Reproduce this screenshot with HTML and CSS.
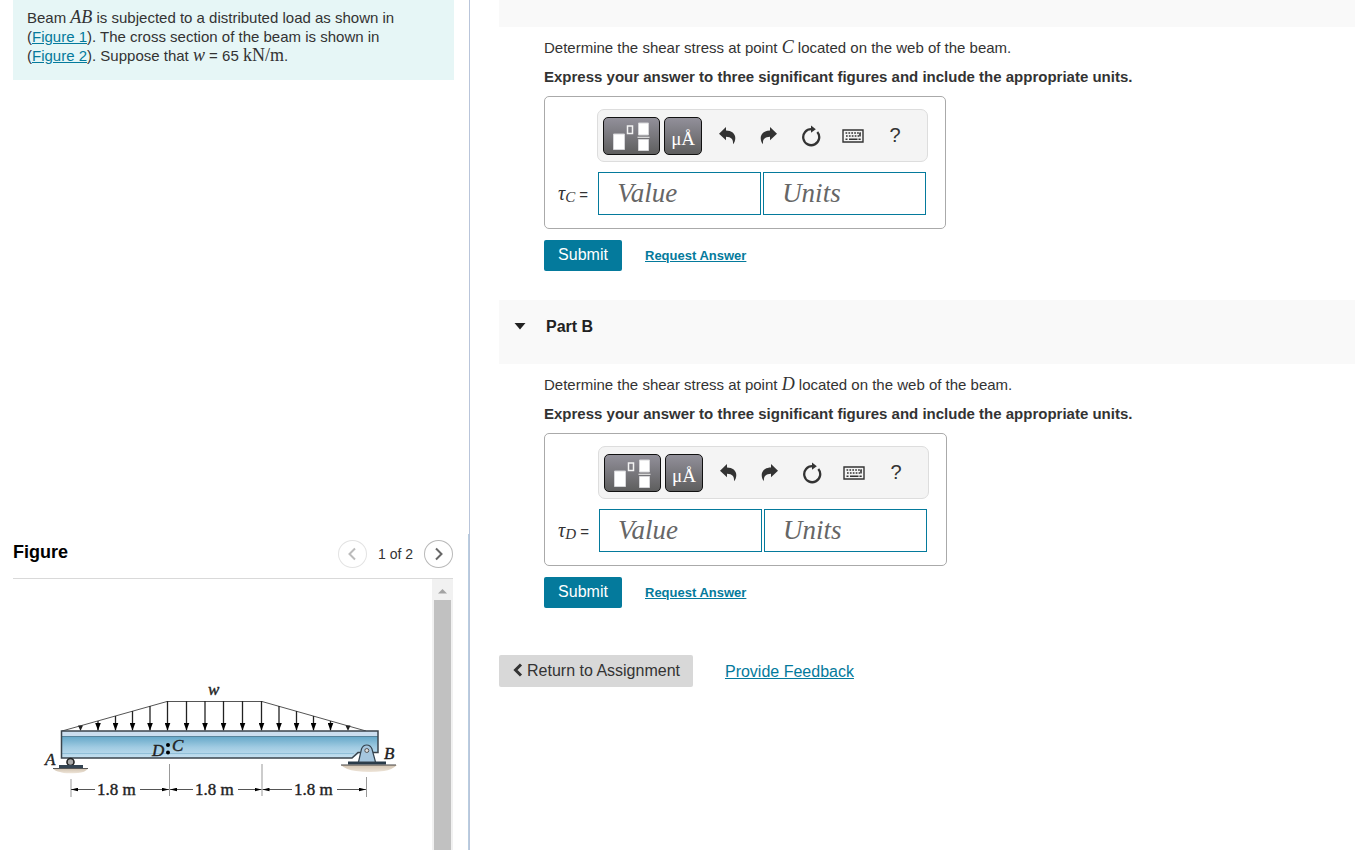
FILE: index.html
```html
<!DOCTYPE html>
<html lang="en">
<head>
<meta charset="utf-8">
<title>Shear stress in beam AB</title>
<link rel="stylesheet" href="styles.css">
</head>
<body>
<svg class="defs" aria-hidden="true">
  <symbol id="undo" viewBox="0 0 18 20"><path d="M1 7.700 8 1v3.600c5.500 0 9.300 3 9.300 7.400 0 2.600-.8 4.500-2.300 6.300.5-4.900-1.600-7.400-7-7.600V14.200Z"/></symbol>
  <symbol id="template" viewBox="0 0 37 30">
    <path d="M.5 13h11v15.500H.5zM25.500 2h10v12h-10zM25.500 18.500h10v11h-10z" fill="#fff" stroke="#d5d5d8" stroke-width="1"/>
    <path d="M14.500 5h5v7.500h-5z" fill="none" stroke="#f3f3f3" stroke-width="1.500"/>
    <path d="M24.500 16.300h12" stroke="#e4e4e4" stroke-width="1.200"/>
  </symbol>
  <symbol id="reset" viewBox="0 0 20 22"><path d="M10.500 4.200A8 8 0 1 0 16.300 7" fill="none" stroke="currentColor" stroke-width="2.300"/><path d="M10 .6 14.800 4.200 10 7.800Z"/></symbol>
  <symbol id="keyboard" viewBox="0 0 22 14"><path d="M1 1h20v12H1z" fill="none" stroke="currentColor" stroke-width="1.400"/><path d="M3.500 4h15" stroke="currentColor" stroke-width="1.700" stroke-dasharray="1.700 1.200"/><path d="M4 7h13" stroke="currentColor" stroke-width="1.700" stroke-dasharray="1.700 1.200"/><path d="M3.500 10.200h2M7 10.200h8.500M16.500 10.200h2.200M18 3.500v4" stroke="currentColor" stroke-width="1.600"/></symbol>
</svg>
<div class="layout">
  <aside class="sidebar">
    <section class="problem">
      <p>Beam <i class="math">AB</i> is subjected to a distributed load as shown in (<a href="#figure">Figure 1</a>). The cross section of the beam is shown in (<a href="#figure">Figure 2</a>). Suppose that <i class="math">w</i> = 65 <span class="math">kN/m</span>.</p>
    </section>
    <section class="figure" id="figure">
      <header class="figure-head">
        <h2>Figure</h2>
        <nav class="pager" aria-label="Figures">
          <button class="round" aria-label="Previous figure" disabled><svg viewBox="0 0 10 14"><path d="M8 1.500 2.500 7 8 12.500"/></svg></button>
          <span>1 of 2</span>
          <button class="round" aria-label="Next figure"><svg viewBox="0 0 10 14"><path d="M2 1.500 7.500 7 2 12.500"/></svg></button>
        </nav>
      </header>
      <div class="viewer">
        <svg class="drawing" viewBox="13 579 419 271" role="img" aria-label="Beam AB with a distributed load w over three 1.8 m spans">
          <defs>
            <linearGradient id="web" x1="0" y1="0" x2="0" y2="1"><stop offset=".15" stop-color="#5da3c5"/><stop offset=".6" stop-color="#a0cbe2"/><stop offset="1" stop-color="#c5e0f0"/></linearGradient>
            <linearGradient id="soil" x1="0" y1="0" x2="0" y2="1"><stop offset="0" stop-color="#d2c3b0"/><stop offset="1" stop-color="#eee5d9"/></linearGradient>
            <marker id="down" viewBox="0 0 6 8" refX="3" refY="8" markerWidth="6" markerHeight="8" markerUnits="userSpaceOnUse"><path d="M0 0h6L3 8Z"/></marker>
            <marker id="tip" viewBox="0 0 8 4" refX="8" refY="2" markerWidth="7" markerHeight="4" markerUnits="userSpaceOnUse" orient="auto-start-reverse"><path d="M0 0 8 2 0 4Z"/></marker>
          </defs>
          <path d="M62 731 167 701.500H262L366 731" fill="none" stroke="#555" stroke-width="1"/>
          <path d="M98 721v9.500" class="load"/><path d="M115.500 716v14.500" class="load"/><path d="M132.500 711v19.500" class="load"/><path d="M150 706v24.500" class="load"/><path d="M167.500 701v29.500" class="load"/><path d="M186.500 701v29.500" class="load"/><path d="M205 701v29.500" class="load"/><path d="M223.500 701v29.500" class="load"/><path d="M242.500 701v29.500" class="load"/><path d="M261.500 701v29.500" class="load"/><path d="M279 706v24.500" class="load"/><path d="M296.500 711v19.500" class="load"/><path d="M313.500 716v14.500" class="load"/><path d="M330.500 721v9.500" class="load"/>
          <path d="M78 725.500h5L80.500 731ZM345.500 725.500h5L348 731Z" fill="#222"/>
          <path d="M53 768.500h35q-3 4-10 4.500-14 1-18-1-5-1-7-3.500Z" fill="url(#soil)"/>
          <path d="M341 765h56q-5 5-13 6-15 2-28 0-10-1-15-6Z" fill="url(#soil)"/>
          <path d="M62 731h316v21h-17l-8 6H62Z" fill="url(#web)"/>
          <path d="M62 731h316v5H62Z" fill="#cbdeef"/>
          <path d="M62 736.500h316" stroke="#56849c"/>
          <path d="M62 753.500h292" stroke="#91bfd8"/>
          <path d="M61.500 731H378v21.500h-20L352 758H61.500Z" fill="none" stroke="#3b444c" stroke-width="1.500"/>
          <circle cx="70.500" cy="762" r="3.500" fill="#aaa" stroke="#222" stroke-width="1.600"/>
          <path d="M59 766.500h24" stroke="#344452" stroke-width="3"/><path d="M53 768.500h35" stroke="#555"/>
          <path d="M348 763h38" stroke="#293b49" stroke-width="3"/><path d="M341 765h55" stroke="#444"/>
          <path d="M358.500 762 361.500 749q1.500-4 5.200-4t5.300 4L375.500 762Z" fill="#a6c6de" stroke="#34434f" stroke-width="1.200"/>
          <circle cx="366.800" cy="750.500" r="2" fill="#ddd" stroke="#555"/>
          <circle cx="168" cy="745" r="2"/><circle cx="168" cy="752.500" r="2"/>
          <g stroke="#999" stroke-width="1"><path d="M71 779v18M169.500 764v32M262 764v32M366.500 777v20"/></g>
          <g stroke="#555" stroke-width="1">
            <path d="M71 789.500h24" marker-start="url(#tip)"/><path d="M140 789.500h29" marker-end="url(#tip)"/>
            <path d="M170 789.500h23" marker-start="url(#tip)"/><path d="M238 789.500h23.500" marker-end="url(#tip)"/>
            <path d="M262.500 789.500h29.500" marker-start="url(#tip)"/><path d="M337 789.500h29" marker-end="url(#tip)"/>
          </g>
          <g class="letters"><text x="208" y="695">w</text><text x="45" y="765">A</text><text x="152" y="756">D</text><text x="172" y="751">C</text><text x="384" y="759">B</text></g>
          <g class="dims"><text x="97" y="795">1.8 m</text><text x="195" y="795">1.8 m</text><text x="294" y="795">1.8 m</text></g>
        </svg>
        <div class="scrollbar" aria-hidden="true"><svg viewBox="0 0 21 21"><path d="M6 14.500 10.500 10 15 14.500Z"/></svg><div class="thumb"></div></div>
      </div>
    </section>
  </aside>
  <main class="content">
    <div class="band band-a"></div>
    <section class="part">
      <p>Determine the shear stress at point <i class="math">C</i> located on the web of the beam.</p>
      <p class="strong">Express your answer to three significant figures and include the appropriate units.</p>
      <form class="answer">
        <div class="toolbar" role="toolbar" aria-label="Answer tools">
          <button type="button" class="key wide" aria-label="Templates"><svg><use href="#template"/></svg></button>
          <button type="button" class="key units">μÅ</button>
          <button type="button" class="tool" aria-label="Undo"><svg class="arrow"><use href="#undo"/></svg></button>
          <button type="button" class="tool" aria-label="Redo"><svg class="arrow flip"><use href="#undo"/></svg></button>
          <button type="button" class="tool" aria-label="Reset"><svg class="reset"><use href="#reset"/></svg></button>
          <button type="button" class="tool" aria-label="Keyboard"><svg class="keyboard"><use href="#keyboard"/></svg></button>
          <button type="button" class="tool">?</button>
        </div>
        <label for="value-c"><i class="tau">τ<sub>C</sub></i> =</label>
        <div class="fields"><input id="value-c" placeholder="Value"><input aria-label="Units for C" placeholder="Units"></div>
      </form>
      <div class="actions"><button class="submit">Submit</button><a href="#answer-c">Request Answer</a></div>
    </section>
    <header class="band band-b"><svg class="caret" viewBox="0 0 12 7"><path d="M.5 0h11L6 6.500Z"/></svg><h2>Part B</h2></header>
    <section class="part">
      <p>Determine the shear stress at point <i class="math">D</i> located on the web of the beam.</p>
      <p class="strong">Express your answer to three significant figures and include the appropriate units.</p>
      <form class="answer">
        <div class="toolbar" role="toolbar" aria-label="Answer tools">
          <button type="button" class="key wide" aria-label="Templates"><svg><use href="#template"/></svg></button>
          <button type="button" class="key units">μÅ</button>
          <button type="button" class="tool" aria-label="Undo"><svg class="arrow"><use href="#undo"/></svg></button>
          <button type="button" class="tool" aria-label="Redo"><svg class="arrow flip"><use href="#undo"/></svg></button>
          <button type="button" class="tool" aria-label="Reset"><svg class="reset"><use href="#reset"/></svg></button>
          <button type="button" class="tool" aria-label="Keyboard"><svg class="keyboard"><use href="#keyboard"/></svg></button>
          <button type="button" class="tool">?</button>
        </div>
        <label for="value-d"><i class="tau">τ<sub>D</sub></i> =</label>
        <div class="fields"><input id="value-d" placeholder="Value"><input aria-label="Units for D" placeholder="Units"></div>
      </form>
      <div class="actions"><button class="submit">Submit</button><a href="#answer-d">Request Answer</a></div>
    </section>
    <footer class="foot">
      <button class="return"><svg viewBox="0 0 10 14"><path d="M8 1.500 2.500 7 8 12.500"/></svg>Return to Assignment</button>
      <a href="#feedback">Provide Feedback</a>
    </footer>
  </main>
</div>
</body>
</html>
```
FILE: styles.css
```css
* { box-sizing: border-box; }
body { margin: 0; background: #fff; color: #333; font: 15px/19px "Liberation Sans", Arial, sans-serif; }
p, h2 { margin: 0; }
button, input { font: inherit; margin: 0; }
button { padding: 0; cursor: pointer; }
a { color: #047a9c; }
.defs { position: absolute; width: 0; height: 0; }
.math { font-family: "Liberation Serif", serif; font-size: 18px; line-height: 0; }

.layout { display: grid; grid-template-columns: 470px 1fr; min-height: 100vh; }
.sidebar { display: flex; flex-direction: column; justify-content: space-between; border-right: 1px solid #b9c5da; }
.problem { margin: 0 15px 0 13px; padding: 8px 50px 15px 14px; background: #e6f6f6; }
.figure { padding: 0 15px 0 13px; border-right: 1px solid #b9cde0; }
.figure-head { display: flex; align-items: center; justify-content: space-between; height: 45px; padding-bottom: 4px; border-bottom: 1px solid #d9d9d9; }
.figure-head h2 { color: #000; font-size: 18px; padding-bottom: 4px; }
.pager { display: flex; align-items: center; gap: 11px; font-size: 14px; }
.round { display: flex; align-items: center; justify-content: center; width: 29px; height: 28px; border: 1px solid #b9b9b9; border-radius: 50%; background: #fff; color: #666; }
.round:disabled { border-color: #e3e3e3; color: #bbb; }
.round svg { width: 10px; height: 14px; fill: none; stroke: currentColor; stroke-width: 2; }
.viewer { display: flex; }
.drawing { flex: 1; min-width: 0; }
.scrollbar { display: flex; flex-direction: column; width: 21px; background: #f1f1f1; }
.scrollbar svg { width: 21px; height: 21px; fill: #a3a3a3; }
.thumb { flex: 1; margin: 0 2px; background: #c1c1c1; }
.load { stroke: #222; stroke-width: 1.3; marker-end: url(#down); }
.letters { font: italic 17px "Liberation Serif", serif; fill: #222; stroke: #222; stroke-width: .4px; }
.dims { font: 17px "Liberation Serif", serif; fill: #222; stroke: #222; stroke-width: .4px; }

.content { padding-left: 29px; }
.band { background: #f9f9f9; }
.band-a { height: 27px; }
.band-b { display: flex; align-items: center; gap: 20px; height: 64px; margin-top: 29px; padding: 0 0 12px 15px; color: #222; }
.band h2 { font-size: 16px; }
.caret { width: 12px; height: 7px; fill: #222; }
.part { display: flex; flex-direction: column; align-items: flex-start; gap: 10px; padding: 11px 0 0 45px; }
.strong { font-weight: 700; }
.answer { display: grid; grid-template-columns: auto auto; align-items: center; gap: 10px 9px; padding: 12px 17px 13px 13px; border: 1px solid #aaa; border-radius: 5px; }
.toolbar { grid-column: 2; display: flex; align-items: center; gap: 4px; height: 53px; padding: 0 5px; border: 1px solid #ddd; border-radius: 7px; background: #f4f4f4; }
.key { display: flex; align-items: center; justify-content: center; width: 38px; height: 38px; border: 1px solid #111; border-radius: 5px; background: linear-gradient(#92909a, #5e5e5e); color: #fff; font: 19px "Liberation Serif", serif; }
.wide { width: 57px; }
.wide svg { width: 37px; height: 30px; }
.units { margin-right: 2px; padding-top: 6px; }
.tool { display: flex; align-items: center; justify-content: center; width: 38px; height: 38px; border: 0; background: none; color: #333; font-size: 20px; }
.tool svg { fill: currentColor; }
.arrow { width: 18px; height: 20px; }
.flip { transform: scaleX(-1); }
.reset { width: 20px; height: 22px; }
.keyboard { width: 22px; height: 14px; }
.tau { font: italic 20px/1 "Liberation Serif", serif; }
.tau sub { font-size: 15px; line-height: 0; vertical-align: -2px; }
.fields { display: flex; gap: 2px; padding: 0 2px 0 1px; }
.fields input { width: 163px; height: 43px; padding: 0 18px; border: 1px solid #047a9c; border-radius: 0; background: #fff; font: italic 27px "Liberation Serif", serif; }
.fields input::placeholder { color: #666; opacity: 1; }
.actions { display: flex; align-items: center; gap: 23px; padding-top: 1px; }
.actions a { font-size: 13px; font-weight: 700; }
.submit { width: 78px; height: 31px; padding-bottom: 2px; border: 0; border-radius: 2px; background: #047a9c; color: #fff; font-size: 16px; }
.foot { display: flex; align-items: center; gap: 32px; margin-top: 47px; font-size: 16px; }
.return { display: flex; align-items: center; gap: 4px; height: 32px; padding: 0 13px 2px 14px; border: 0; border-radius: 2px; background: #d8d8d8; color: #333; }
.return svg { width: 10px; height: 14px; fill: none; stroke: currentColor; stroke-width: 3; }
```
